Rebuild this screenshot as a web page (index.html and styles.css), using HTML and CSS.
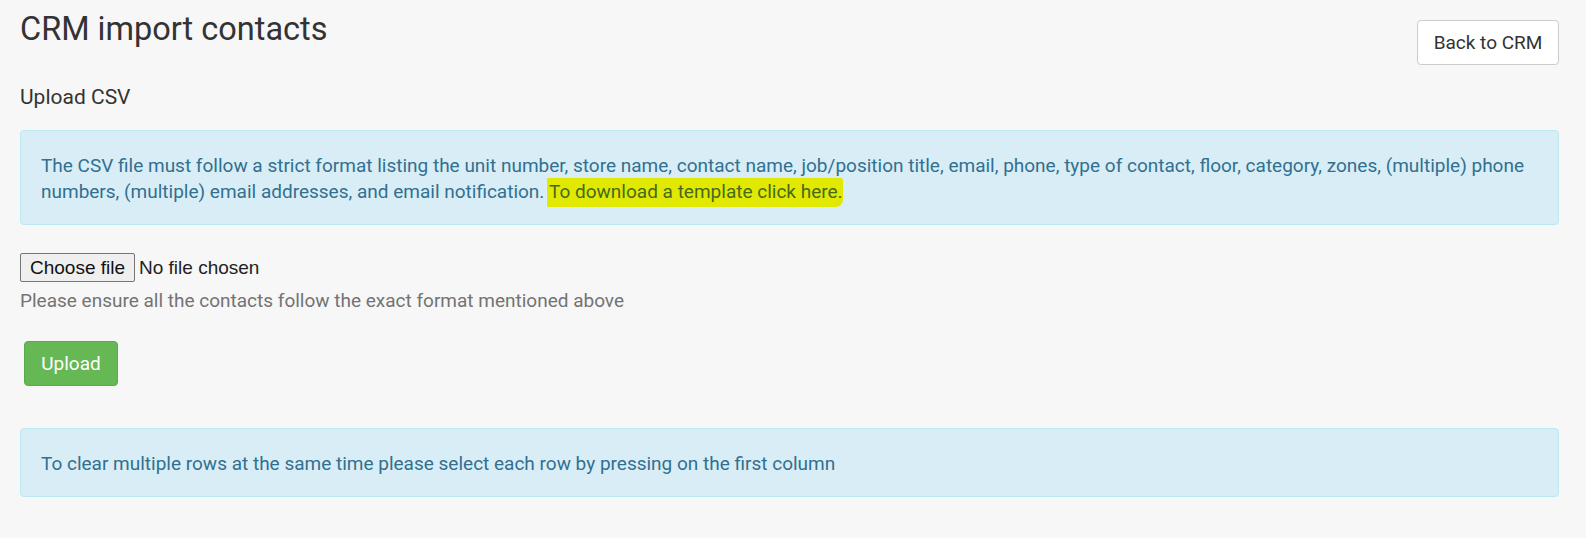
FILE: index.html
```html
<!DOCTYPE html>
<html lang="en">
<head>
    <meta charset="UTF-8">
    <meta name="viewport" content="width=device-width, initial-scale=1.0">
    <title>CRM import contacts</title>
    <link rel="stylesheet" href="styles.css">
</head>
<body>
    <div class="page">
        <div class="header">
            <h1>CRM import contacts</h1>
            <button class="btn-default" type="button">Back to CRM</button>
        </div>

        <h4>Upload CSV</h4>

        <div class="alert-info">
            The CSV file must follow a strict format listing the unit number, store name, contact name, job/position title, email, phone, type of contact, floor, category, zones, (multiple) phone numbers, (multiple) email addresses, and email notification. <a href="#" class="marker">To download a template click here.</a>
        </div>

        <form class="upload-form">
            <div class="file-row">
                <label class="file-btn">
                    Choose file
                    <input type="file" class="file-input" name="csv">
                </label>
                <span class="file-name">No file chosen</span>
            </div>
            <p class="help">Please ensure all the contacts follow the exact format mentioned above</p>
            <button class="btn-success" type="submit">Upload</button>
        </form>

        <div class="alert-info single">
            To clear multiple rows at the same time please select each row by pressing on the first column
        </div>
    </div>
</body>
</html>
```

FILE: styles.css
```css
body {
    margin: 0;
    background-color: #f7f7f7;
    font-family: Roboto, "Liberation Sans", Arial, sans-serif;
    color: #333;
}
.page {
    padding: 0 27px 0 20px;
}
.header {
    display: flex;
    justify-content: space-between;
    align-items: flex-start;
}
h1 {
    font-size: 32.5px;
    font-weight: 400;
    line-height: 36px;
    margin: 11px 0 0 0;
}
.btn-default {
    margin-top: 20px;
    width: 142px;
    height: 45px;
    background-color: #fff;
    border: 1px solid #ccc;
    border-radius: 4px;
    font-family: inherit;
    font-size: 19px;
    color: #333;
    cursor: pointer;
}
h4 {
    font-size: 21px;
    font-weight: 400;
    line-height: 26px;
    margin: 19px 0 0 0;
}
.alert-info {
    background-color: #d9edf7;
    border: 1px solid #bce8f1;
    border-radius: 4px;
    color: #31708f;
    font-size: 19px;
    line-height: 26px;
    padding: 22px 20px 19px;
    margin-top: 20px;
}
.alert-info.single {
    margin-top: 42px;
}
.marker {
    color: #46691f;
    text-decoration: none;
    background-color: #e1e900;
    background-image: linear-gradient(to bottom, #e1e900, #e1e900);
    padding: 2px 0 4px 2px;
    margin-left: -2px;
    border-radius: 0 3px 8px 0;
}
.upload-form {
    margin-top: 28px;
}
.file-row {
    display: flex;
    align-items: center;
    height: 29px;
    font-family: "Liberation Sans", Arial, sans-serif;
    font-size: 19px;
}
.file-btn {
    display: block;
    box-sizing: border-box;
    width: 115px;
    height: 29px;
    line-height: 27px;
    text-align: center;
    background-color: #efefef;
    border: 1px solid #767676;
    border-radius: 2px;
    color: #111;
    cursor: pointer;
}
.file-input {
    display: none;
}
.file-name {
    margin-left: 4px;
    color: #222;
}
.help {
    color: #737373;
    font-size: 19px;
    line-height: 26px;
    margin: 6px 0 0 0;
}
.btn-success {
    margin: 27px 0 0 4px;
    width: 94px;
    height: 45px;
    background-color: #66b855;
    border: 1px solid #5aaa4c;
    border-radius: 4px;
    color: #fff;
    font-family: inherit;
    font-size: 19px;
    cursor: pointer;
}
```
